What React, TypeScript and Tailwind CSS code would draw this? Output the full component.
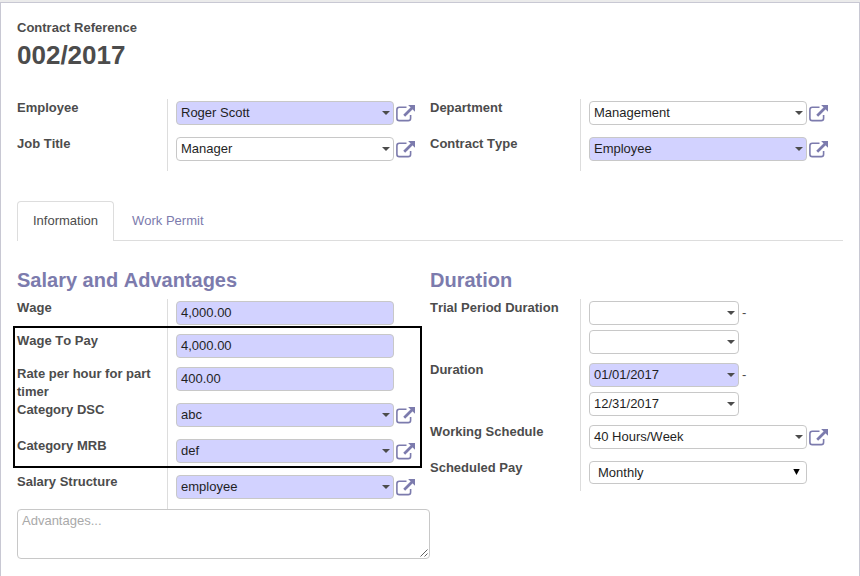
import type { ReactNode } from 'react';

function ExternalLink() {
  return (
    <svg className="ml-0.5 mt-1 h-[18px] w-5 shrink-0" viewBox="0 0 20 18" fill="none">
      <path d="M10.5 2.3H3.3Q.9 2.3 .9 4.7V13.2Q.9 15.6 3.3 15.6H12.2Q14.6 15.6 14.6 13.2V10" stroke="#7c7bad" strokeWidth="1.6" />
      <path d="M8.2 10.8L16 3" stroke="#7c7bad" strokeWidth="2.7" />
      <path d="M12.1 0H19V6.8Z" fill="#7c7bad" />
    </svg>
  );
}

type FieldProps = { value?: string; required?: boolean; arrow?: boolean; link?: boolean; short?: boolean; dash?: boolean };

function Field({ value = '', required, arrow = true, link, short, dash }: FieldProps) {
  return (
    <div className="flex h-6">
      <div
        className={`flex h-6 items-center justify-between rounded border border-[#c8c8c8] pl-1 pr-[3px] leading-[18px] text-[#1f1f1f] ${required ? 'bg-[#d2d2ff]' : 'bg-white'} ${short ? 'w-[150px]' : 'w-[218px]'}`}
      >
        <span>{value}</span>
        {arrow && (
          <svg className="h-1 w-2" viewBox="0 0 8 4">
            <path d="M0 0H8L4 4Z" fill="#4c4c4c" />
          </svg>
        )}
      </div>
      {link && <ExternalLink />}
      {dash && <span className="ml-[3px] leading-6">-</span>}
    </div>
  );
}

function Row({ label, height, children }: { label: string; height: string; children: ReactNode }) {
  return (
    <div className={`flex ${height}`}>
      <div className="w-[151px] shrink-0 border-r border-[#dddddd] pr-2 font-bold leading-[18px]">{label}</div>
      <div className="flex flex-col gap-[5px] pl-2 pt-0.5">{children}</div>
    </div>
  );
}

export default function App() {
  return (
    <div className="h-[576px] w-[860px] overflow-hidden bg-[#ebebeb] pt-0.5 font-['Liberation_Sans',Arial,sans-serif] text-[13px] text-[#4c4c4c] [font-kerning:none]">
      <main className="h-[574px] border border-b-0 border-[#c8c8d3] bg-white px-4 pt-4">
        <div className="font-bold leading-[18px]">Contract Reference</div>
        <h1 className="h-[62px] text-[26px] font-bold leading-9">002/2017</h1>

        <section className="grid grid-cols-2">
          <div className="w-[413px]">
            <Row label="Employee" height="h-9"><Field value="Roger Scott" required link /></Row>
            <Row label="Job Title" height="h-9"><Field value="Manager" link /></Row>
          </div>
          <div className="w-[413px]">
            <Row label="Department" height="h-9"><Field value="Management" link /></Row>
            <Row label="Contract Type" height="h-9"><Field value="Employee" required link /></Row>
          </div>
        </section>

        <nav className="mt-[30px] flex h-10 border-b border-[#dddddd]">
          <div className="h-10 w-[97px] rounded-t border border-b-0 border-[#dddddd] bg-white pl-[15px] leading-[38px]">Information</div>
          <div className="pl-[18px] leading-10 text-[#7c7bad]">Work Permit</div>
        </nav>

        <section className="relative mt-[27px] grid grid-cols-2">
          <div>
            <h2 className="h-[31px] text-[20px] font-bold leading-6 text-[#7c7bad]">Salary and Advantages</h2>
            <Row label="Wage" height="h-[33px]"><Field value="4,000.00" required arrow={false} /></Row>
            <Row label="Wage To Pay" height="h-[33px]"><Field value="4,000.00" required arrow={false} /></Row>
            <Row label="Rate per hour for part timer" height="h-9"><Field value="400.00" required arrow={false} /></Row>
            <Row label="Category DSC" height="h-9"><Field value="abc" required link /></Row>
            <Row label="Category MRB" height="h-9"><Field value="def" required link /></Row>
            <Row label="Salary Structure" height="h-9"><Field value="employee" required link /></Row>
            <div className="flex h-[50px] w-[413px] items-end justify-between rounded border border-[#c8c8c8] bg-white pl-1">
              <span className="self-start pt-0.5 leading-[18px] text-[#a9a9a9]">Advantages...</span>
              <svg className="mb-px mr-px h-2 w-2" viewBox="0 0 8 8" fill="none">
                <path d="M.5 7.5L7.5 .5M4.5 7.5L7.5 4.5" stroke="#606060" strokeWidth="1" />
              </svg>
            </div>
          </div>
          <div>
            <h2 className="h-[31px] text-[20px] font-bold leading-6 text-[#7c7bad]">Duration</h2>
            <Row label="Trial Period Duration" height="h-[62px]">
              <Field short dash />
              <Field short />
            </Row>
            <Row label="Duration" height="h-[62px]">
              <Field value="01/01/2017" required short dash />
              <Field value="12/31/2017" short />
            </Row>
            <Row label="Working Schedule" height="h-9"><Field value="40 Hours/Week" link /></Row>
            <Row label="Scheduled Pay" height="h-8">
              <div className="flex h-[23px] w-[218px] items-center justify-between rounded border border-[#c8c8c8] bg-white pl-2 pr-1.5 leading-[18px] text-[#1f1f1f]">
                <span>Monthly</span>
                <svg className="mb-0.5 h-1.5 w-[7px]" viewBox="0 0 7 6"><path d="M.3 0H6.7L3.5 6Z" fill="#000" /></svg>
              </div>
            </Row>
          </div>
          <div className="absolute -left-1 top-[58px] h-[142px] w-[409px] border-2 border-black" />
        </section>
      </main>
    </div>
  );
}
